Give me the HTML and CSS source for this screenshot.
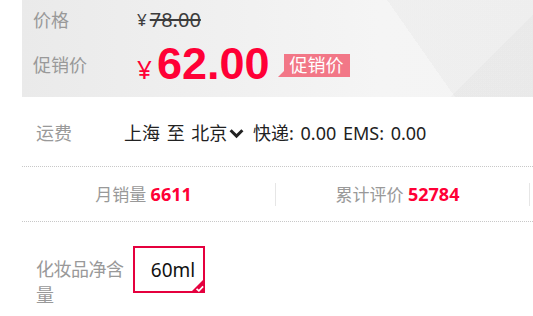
FILE: index.html
```html
<!DOCTYPE html>
<html lang="zh-CN">
<head>
<meta charset="utf-8">
<link rel="stylesheet" href="styles.css">
</head>
<body>
<div class="wrap">
  <div class="price-box">
    <div class="prow prow-orig">
      <span class="label">价格</span>
      <span class="orig"><span class="yen-s">¥</span><span class="strike">78.00</span></span>
    </div>
    <div class="prow prow-promo">
      <span class="label">促销价</span>
      <span class="promo"><span class="yen-l">¥</span><span class="num">62.00</span></span>
      <span class="tag">促销价</span>
    </div>
  </div>
  <div class="freight">
    <span class="label">运费</span>
    <span class="fvalue">上海 至 北京<svg class="chev" viewBox="0 0 14 10" width="15" height="11"><path d="M1.5 2 L7 7.5 L12.5 2" fill="none" stroke="#222" stroke-width="2.8"/></svg> 快递: 0.00 EMS: 0.00</span>
  </div>
  <div class="stats">
    <div class="stat">月销量 <b>6611</b></div>
    <div class="stat">累计评价 <b>52784</b></div>
  </div>
  <div class="spec">
    <div class="spec-label">化妆品净含量</div>
    <div class="opt">60ml
      <svg class="tick" viewBox="0 0 16 16" width="15" height="15"><path d="M16 0 L16 16 L0 16 Z" fill="#e5003e"/><path d="M7 11.5 L9.5 13.8 L14 9" fill="none" stroke="#fff" stroke-width="1.8"/></svg>
    </div>
  </div>
</div>
</body>
</html>
```
FILE: styles.css
```css
* { box-sizing: border-box; }
html, body { margin: 0; padding: 0; background: #fff; }
body {
  width: 533px;
  height: 316px;
  overflow: hidden;
  font-family: "Noto Sans", "Noto Sans CJK SC", sans-serif;
  color: #333;
}
.wrap { padding-left: 22px; }
.price-box {
  height: 97px;
  padding-left: 11px;
  background-color: #ededed;
  background-image:
    linear-gradient(135deg, transparent 86.5%, rgba(0,0,0,0.02) 86.5%),
    linear-gradient(55deg, transparent 74.8%, rgba(0,0,0,0.022) 74.8%),
    linear-gradient(90deg, #eaeaea 0%, #f1f1f1 45%, #f5f5f5 70%, #f4f4f4 100%);
}
.label { color: #999; font-size: 18px; }
.prow { display: flex; align-items: center; }
.prow .label { width: 104px; }
.prow-orig { height: 38px; }
.orig { font-size: 20px; color: #3c3c3c; display: flex; align-items: center; }
.yen-s { font-size: 17px; margin-right: 3px; }
.strike { text-decoration: line-through; }
.prow-promo { height: 52px; }
.prow-promo .label { padding-top: 0; }
.promo { color: #ff0036; display: flex; align-items: baseline; }
.yen-l { font-size: 26px; margin-right: 5px; }
.num { font-family: "Liberation Sans", sans-serif; font-weight: bold; font-size: 45px; line-height: 52px; }
.tag {
  position: relative;
  margin-left: 14px;
  margin-top: 2px;
  background: #f27787;
  color: #fff;
  font-size: 18px;
  line-height: 23px;
  padding: 0 6px;
}
.tag::before {
  content: "";
  position: absolute;
  left: -6px;
  bottom: 0;
  border-style: solid;
  border-width: 0 0 6px 6px;
  border-color: transparent transparent #f27787 transparent;
}
.freight {
  display: flex;
  align-items: center;
  height: 70px;
  padding-left: 14px;
  border-bottom: 1px dotted #c8c8c8;
}
.freight .label { width: 88px; }
.fvalue { font-size: 18px; color: #222; word-spacing: 2px; }
.chev { margin: 0 2px 0 2px; vertical-align: 1px; }
.stats {
  display: flex;
  height: 55px;
  align-items: center;
  border-bottom: 1px dotted #c8c8c8;
}
.stat {
  width: 254px;
  text-align: center;
  padding-right: 10px;
  color: #999;
  font-size: 17px;
  line-height: 23px;
  border-right: 1px solid #e6e6e6;
}
.stat b { color: #ff0036; font-weight: bold; font-size: 18px; }
.spec {
  display: flex;
  align-items: flex-start;
  padding: 24px 0 0 14px;
}
.spec-label { width: 91px; color: #999; font-size: 18px; line-height: 26px; margin-top: 10px; letter-spacing: -0.5px; }
.opt {
  position: relative;
  margin-left: 6px;
  width: 72px;
  height: 47px;
  padding-left: 8px;
  border: 2px solid #e5003e;
  display: flex;
  align-items: center;
  justify-content: center;
  font-size: 19px;
  color: #111;
}
.tick { position: absolute; right: -2px; bottom: -2px; }
```
